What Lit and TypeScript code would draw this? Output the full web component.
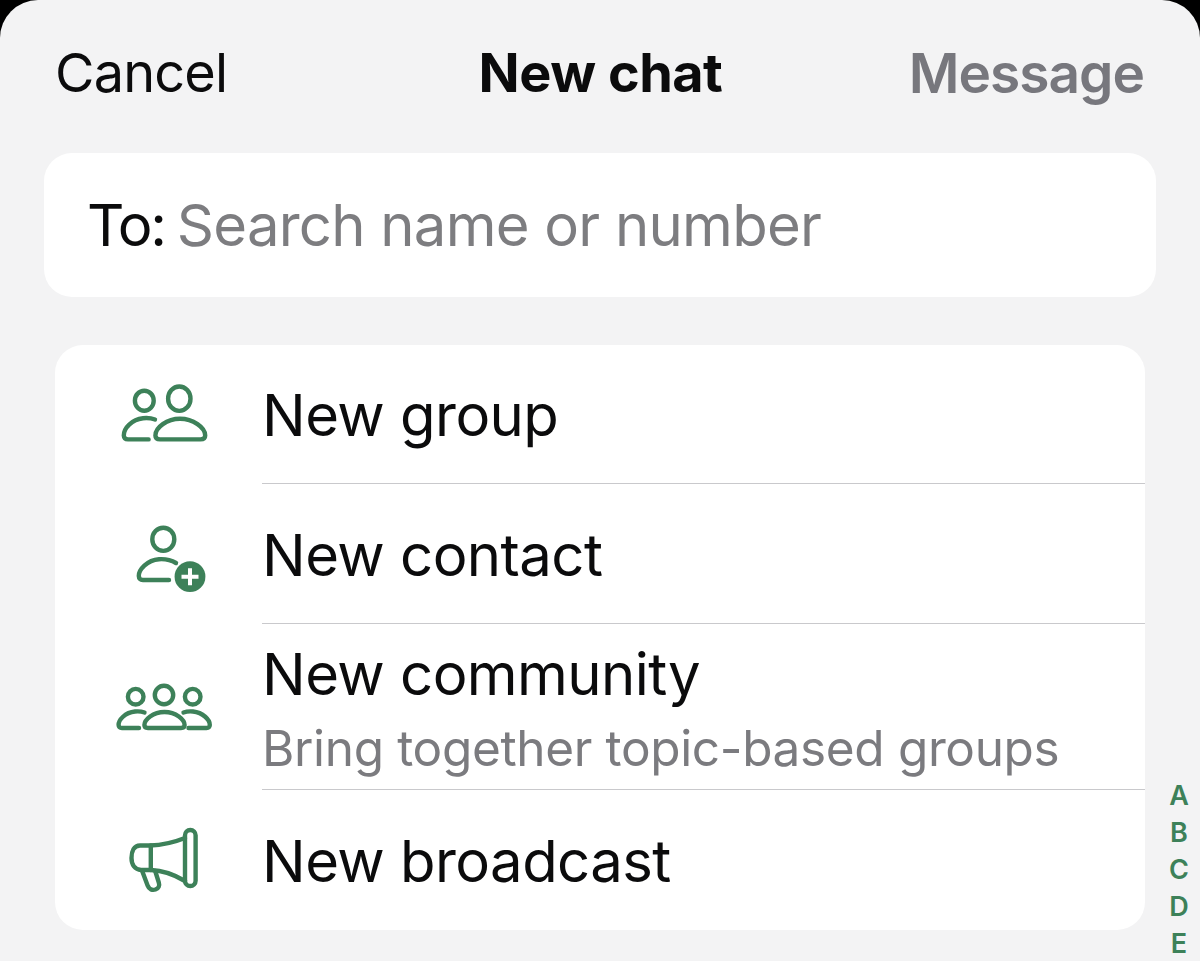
import { LitElement, html, svg, css } from "lit";
import { customElement } from "lit/decorators.js";

const GROUP = svg`
  <ellipse cx="144.3" cy="400.7" rx="9.4" ry="10" />
  <ellipse cx="179.3" cy="398.7" rx="11.2" ry="12.2" />
  <path d="M155 419.5C151 418 147 417.8 143 418.2C132 419.5 123.6 428 123.8 435.5C123.9 438 125.4 439.4 128 439.4H148.6" />
  <path d="M180 418.8C167 418.8 155.4 427.5 155.4 435.5C155.4 438 157 439.4 160 439.4H200.5C203.5 439.4 205.2 438 205.2 435.5C205.2 427.5 193 418.8 180 418.8Z" />
`;

const CONTACT = svg`
  <ellipse cx="163.3" cy="539.3" rx="11" ry="11.6" />
  <path d="M176 563C171 560 165 558.8 159 559.2C147 560 138.6 570 138.8 576C138.9 578.6 140.4 580 143 580H169" />
  <circle class="solid" cx="190" cy="576.7" r="15.4" />
  <path class="cross" d="M181.5 576.7H198.5M190 568.2V585.2" />
`;

const COMMUNITY = svg`
  <circle cx="135.7" cy="696.7" r="7.8" />
  <circle cx="164" cy="695" r="9.2" />
  <circle cx="192.7" cy="696.7" r="7.8" />
  <path d="M144.5 712.5C141.5 711.4 138 711.2 135 711.5C125 712.5 118.4 720 118.6 725C118.7 727 120 728 122 728H139" />
  <path d="M164.5 712C153 712 144.4 719.5 144.4 725C144.4 727 145.6 728 148 728H181C183.4 728 184.6 727 184.6 725C184.6 719.5 176 712 164.5 712Z" />
  <path d="M183.5 712.5C186.5 711.4 190 711.2 193 711.5C203 712.5 210 720 209.8 725C209.7 727 208.6 728 206.5 728H188.5" />
`;

const BROADCAST = svg`
  <rect x="185" y="830" width="10.6" height="56" rx="5.3" />
  <path d="M185 838C175 842 165 845 150 845.5H140C134 845.5 131.5 851 131.5 858C131.5 865 135 869.5 141 870H151C165 870.5 175 875 185 881" />
  <path d="M150.8 845.5V870" />
  <path d="M142 870.5L147.6 885.5C149 889.5 152.5 890.5 155.5 889.5C158.5 888.5 159.8 885.5 158.8 882.5L155.2 871" />
`;

const ROWS = [
  { title: "New group", icon: GROUP, top: 345, height: 138 },
  { title: "New contact", icon: CONTACT, top: 483, height: 140 },
  {
    title: "New community",
    sub: "Bring together topic-based groups",
    icon: COMMUNITY,
    top: 623,
    height: 166
  },
  { title: "New broadcast", icon: BROADCAST, top: 789, height: 141 }
];

const INDEX = ["A", "B", "C", "D", "E"];

@customElement("app-root")
export class AppRoot extends LitElement {
  static override styles = css`
    :host {
      display: block;
      width: 1200px;
      height: 961px;
      overflow: hidden;
      background: #000;
      font-family: Inter, "Liberation Sans", sans-serif;
      color: #0b0b0c;
    }

    .sheet {
      position: relative;
      height: 961px;
      box-sizing: border-box;
      padding-top: 37px;
      background: #f3f3f4;
      border-radius: 38px 38px 0 0;
      overflow: hidden;
    }

    .nav {
      display: grid;
      grid-template-columns: 1fr auto 1fr;
      align-items: center;
      height: 72px;
      padding: 0 56px 0 55px;
      line-height: 72px;
    }
    .cancel {
      font-size: 54px;
      letter-spacing: -0.8px;
    }
    .title {
      margin-left: 2px;
      font-weight: 700;
      font-size: 54px;
      letter-spacing: -0.5px;
    }
    .action {
      justify-self: end;
      font-size: 55px;
      font-weight: 600;
      letter-spacing: -1px;
      color: #77777d;
    }

    .search {
      display: flex;
      align-items: center;
      gap: 12px;
      height: 144px;
      margin: 44px 44px 0;
      padding: 0 43px;
      background: #fff;
      border-radius: 28px;
      font-size: 58px;
    }
    .to {
      letter-spacing: -2.2px;
    }
    .placeholder {
      letter-spacing: -0.75px;
      color: #7d7d80;
    }

    .list {
      margin: 48px 55px 0;
      background: #fff;
      border-radius: 28px;
      overflow: hidden;
    }
    .row {
      display: flex;
    }
    .icon {
      flex: none;
      width: 110px;
      margin: 0 44px 0 53px;
      fill: none;
      stroke: #3d8159;
      stroke-width: 4.4;
      stroke-linecap: round;
      stroke-linejoin: round;
    }
    .icon .solid {
      fill: #3d8159;
      stroke: none;
    }
    .icon .cross {
      stroke: #fff;
      stroke-width: 4;
      stroke-linecap: butt;
    }
    .body {
      flex: 1;
      display: flex;
      flex-direction: column;
      justify-content: center;
      min-width: 0;
      box-sizing: border-box;
      padding-top: 2px;
    }
    .row + .row .body {
      border-top: 1px solid #c9c9cc;
    }
    .row .body.double {
      padding-top: 5px;
    }
    .label {
      font-size: 58px;
      line-height: 68px;
      letter-spacing: -0.55px;
    }
    .sub {
      margin-top: 10px;
      font-size: 49.5px;
      line-height: 60px;
      letter-spacing: -0.35px;
      color: #7b7b7f;
    }

    .index {
      position: absolute;
      top: 777px;
      right: 8px;
      display: flex;
      flex-direction: column;
      width: 26px;
      align-items: center;
      font-size: 27px;
      line-height: 37px;
      font-weight: 600;
      color: #3d8159;
    }
  `;

  override render() {
    return html`
      <div class="sheet">
        <div class="nav">
          <span class="cancel">Cancel</span>
          <span class="title">New chat</span>
          <span class="action">Message</span>
        </div>
        <div class="search">
          <span class="to">To:</span>
          <span class="placeholder">Search name or number</span>
        </div>
        <div class="list">
          ${ROWS.map(
            (row) => html`
              <div class="row">
                <svg
                  class="icon"
                  width="110"
                  height=${row.height}
                  viewBox="108 ${row.top} 110 ${row.height}"
                >
                  ${row.icon}
                </svg>
                <div class="body ${row.sub ? "double" : ""}">
                  <div class="label">${row.title}</div>
                  ${row.sub ? html`<div class="sub">${row.sub}</div>` : null}
                </div>
              </div>
            `
          )}
        </div>
        <div class="index">${INDEX.map((l) => html`<span>${l}</span>`)}</div>
      </div>
    `;
  }
}

declare global {
  interface HTMLElementTagNameMap {
    "app-root": AppRoot;
  }
}
